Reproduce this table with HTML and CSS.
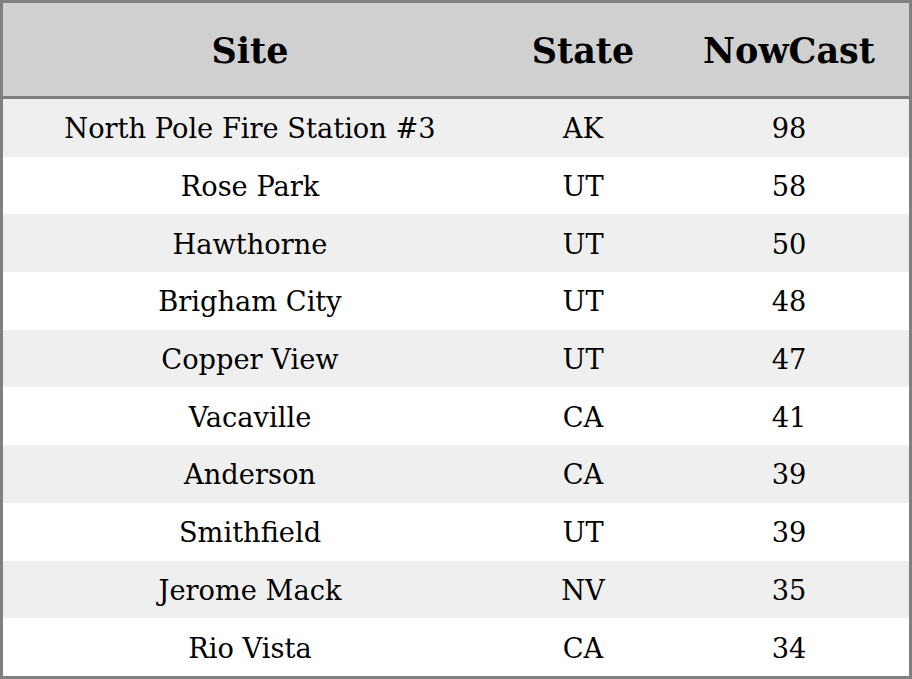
FILE: index.html
```html
<!DOCTYPE html>
<html>
<head>
<meta charset="utf-8">
<link rel="stylesheet" href="styles.css">
</head>
<body>
<table class="grid">
<colgroup><col class="c-site"><col class="c-state"><col class="c-now"></colgroup>
<thead>
<tr><th>Site</th><th>State</th><th>NowCast</th></tr>
</thead>
<tbody>
<tr><td>North Pole Fire Station #3</td><td>AK</td><td>98</td></tr>
<tr><td>Rose Park</td><td>UT</td><td>58</td></tr>
<tr><td>Hawthorne</td><td>UT</td><td>50</td></tr>
<tr><td>Brigham City</td><td>UT</td><td>48</td></tr>
<tr><td>Copper View</td><td>UT</td><td>47</td></tr>
<tr><td>Vacaville</td><td>CA</td><td>41</td></tr>
<tr><td>Anderson</td><td>CA</td><td>39</td></tr>
<tr><td>Smithfield</td><td>UT</td><td>39</td></tr>
<tr><td>Jerome Mack</td><td>NV</td><td>35</td></tr>
<tr><td>Rio Vista</td><td>CA</td><td>34</td></tr>
</tbody>
</table>
</body>
</html>
```
FILE: styles.css
```css
html, body { margin: 0; padding: 0; background: #fff; }
.grid {
  width: 912px;
  height: 679px;
  border-collapse: separate;
  border-spacing: 0;
  table-layout: fixed;
  border: 3px solid #808080;
  box-sizing: border-box;
  font-family: "DejaVu Serif", serif;
  color: #000;
}
.c-site { width: 494px; }
.c-state { width: 172px; }
.c-now { width: 240px; }
.grid th {
  height: 91px;
  background: #d0d0d0;
  font-size: 35px;
  font-weight: bold;
  text-align: center;
  border-bottom: 3px solid #808080;
  padding: 2px 0 0;
}
.grid td {
  height: 55.7px;
  font-size: 27.25px;
  text-align: center;
  padding: 2px 0 0;
}
.grid tbody tr:nth-child(odd) td { background: #efefef; }
```
